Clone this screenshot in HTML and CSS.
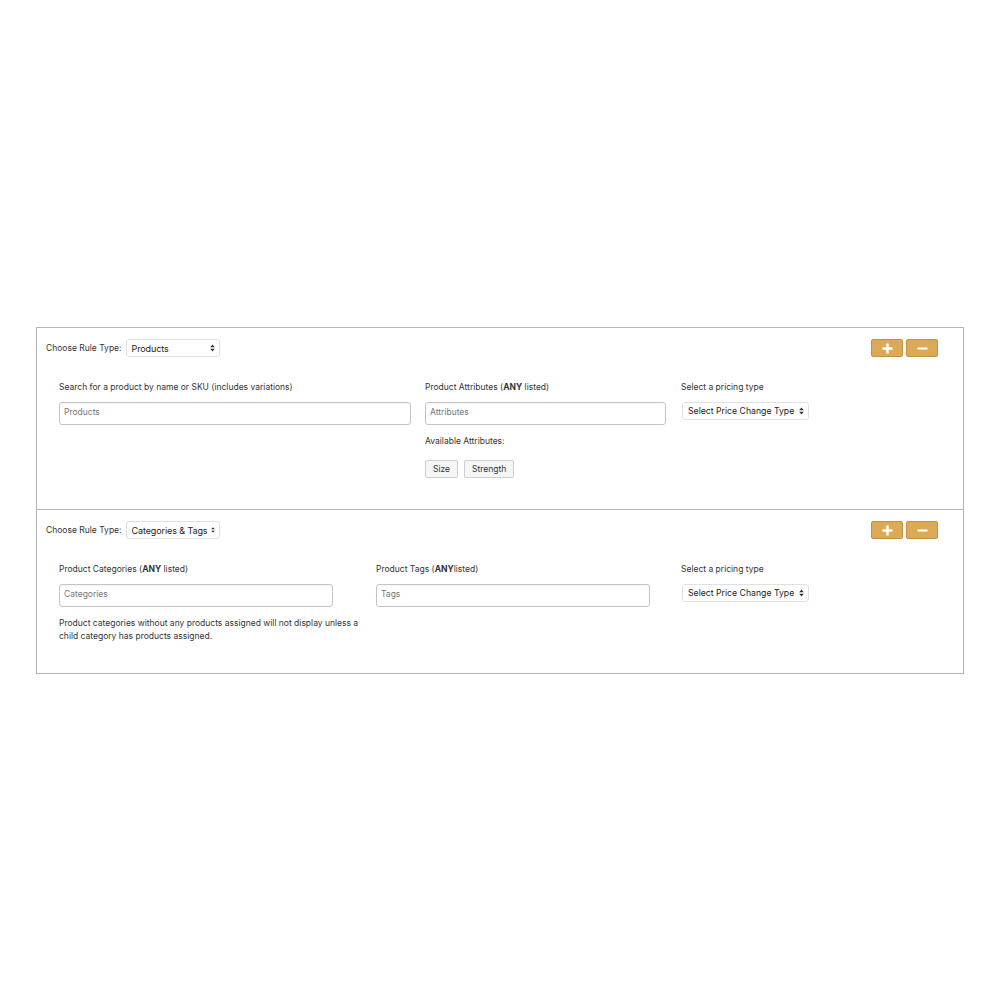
FILE: index.html
```html
<!DOCTYPE html>
<html lang="en">
<head>
  <meta charset="utf-8">
  <title>Pricing Rules</title>
  <link rel="stylesheet" href="styles.css">
</head>
<body>
  <div class="rules">

    <!-- rule 1: products -->
    <div class="rule">
      <div class="rule-head">
        <div class="rule-type">
          <span>Choose Rule Type:</span>
          <div class="select select-type">
            <span>Products</span>
            <svg class="arrows" width="5" height="8" viewBox="0 0 5 8"><path d="M2.5 0.5L4.8 3.2H0.2Z M2.5 7.5L4.8 4.8H0.2Z" fill="#333"/></svg>
          </div>
        </div>
        <div class="rule-actions">
          <button class="btn-gold" type="button"><svg width="11" height="11" viewBox="0 0 11 11"><path d="M5.5 0.5V10.5M0.5 5.5H10.5" stroke="#fff" stroke-width="2.4"/></svg></button>
          <button class="btn-gold" type="button"><svg width="11" height="11" viewBox="0 0 11 11"><path d="M0.5 5.5H10.5" stroke="#fff" stroke-width="2"/></svg></button>
        </div>
      </div>

      <div class="rule-body products-grid">
        <div class="field">
          <label>Search for a product by name or SKU (includes variations)</label>
          <input type="text" class="input input-wide" placeholder="Products">
        </div>
        <div class="field">
          <label>Product Attributes (<b>ANY</b> listed)</label>
          <input type="text" class="input input-mid" placeholder="Attributes">
          <p class="sub-label">Available Attributes:</p>
          <div class="chips">
            <span class="chip">Size</span>
            <span class="chip">Strength</span>
          </div>
        </div>
        <div class="field">
          <label>Select a pricing type</label>
          <div class="select select-price">
            <span>Select Price Change Type</span>
            <svg class="arrows" width="5" height="8" viewBox="0 0 5 8"><path d="M2.5 0.5L4.8 3.2H0.2Z M2.5 7.5L4.8 4.8H0.2Z" fill="#333"/></svg>
          </div>
        </div>
      </div>
    </div>

    <!-- rule 2: categories & tags -->
    <div class="rule rule-terms">
      <div class="rule-head">
        <div class="rule-type">
          <span>Choose Rule Type:</span>
          <div class="select select-type">
            <span>Categories &amp; Tags</span>
            <svg class="arrows" width="5" height="8" viewBox="0 0 5 8"><path d="M2.5 0.5L4.8 3.2H0.2Z M2.5 7.5L4.8 4.8H0.2Z" fill="#333"/></svg>
          </div>
        </div>
        <div class="rule-actions">
          <button class="btn-gold" type="button"><svg width="11" height="11" viewBox="0 0 11 11"><path d="M5.5 0.5V10.5M0.5 5.5H10.5" stroke="#fff" stroke-width="2.4"/></svg></button>
          <button class="btn-gold" type="button"><svg width="11" height="11" viewBox="0 0 11 11"><path d="M0.5 5.5H10.5" stroke="#fff" stroke-width="2"/></svg></button>
        </div>
      </div>

      <div class="rule-body terms-grid">
        <div class="field">
          <label>Product Categories (<b>ANY</b> listed)</label>
          <input type="text" class="input input-term" placeholder="Categories">
          <p class="help">Product categories without any products assigned will not display unless a child category has products assigned.</p>
        </div>
        <div class="field">
          <label>Product Tags (<b>ANY</b>listed)</label>
          <input type="text" class="input input-term" placeholder="Tags">
        </div>
        <div class="field">
          <label>Select a pricing type</label>
          <div class="select select-price">
            <span>Select Price Change Type</span>
            <svg class="arrows" width="5" height="8" viewBox="0 0 5 8"><path d="M2.5 0.5L4.8 3.2H0.2Z M2.5 7.5L4.8 4.8H0.2Z" fill="#333"/></svg>
          </div>
        </div>
      </div>
    </div>

  </div>
</body>
</html>
```

FILE: styles.css
```css
body {
  margin: 0;
  background: #fff;
  font-family: Inter, "Liberation Sans", sans-serif;
  font-size: 8.5px;
  color: #333;
}

.rules {
  width: 926px;
  margin: 327px 0 0 36px;
  border: 1px solid #b5b5b5;
  border-bottom: none;
}

.rule {
  border-bottom: 1px solid #b5b5b5;
  padding: 11px 25px 31px 9px;
}

.rule-terms {
  padding-bottom: 30px;
}

.rule-head {
  display: flex;
  justify-content: space-between;
  align-items: center;
  height: 18px;
}

.rule-type {
  display: flex;
  align-items: center;
  gap: 4px;
}

.rule-actions {
  display: flex;
  gap: 3px;
}

.btn-gold {
  width: 32px;
  height: 18px;
  padding: 0;
  display: flex;
  align-items: center;
  justify-content: center;
  background: #dcaa56;
  border: 1px solid #c49143;
  border-radius: 2px;
}

.select {
  display: flex;
  align-items: center;
  justify-content: space-between;
  gap: 3px;
  height: 18px;
  box-sizing: border-box;
  padding: 0 4px 0 5px;
  background: #fff;
  border: 1px solid #e0e0e0;
  border-radius: 3px;
  font-size: 9px;
  color: #222;
  white-space: nowrap;
}

.select-type {
  width: 94px;
  letter-spacing: -0.1px;
}

.select-price {
  width: 127px;
  margin: 1px 0 0 1px;
  font-size: 8.7px;
}

.rule-body {
  display: grid;
  margin: 24px 0 0 13px;
}

.products-grid {
  grid-template-columns: 366px 256px 1fr;
}

.terms-grid {
  grid-template-columns: 317px 305px 1fr;
}

label {
  display: block;
  line-height: 12px;
  margin-bottom: 9px;
}

label b {
  font-weight: 700;
}

.input {
  display: block;
  box-sizing: border-box;
  height: 23px;
  padding: 0 4px 3px;
  border: 1px solid #c4c4c4;
  border-radius: 3px;
  font-family: inherit;
  font-size: 8.5px;
  box-shadow: inset 0 1px 1px rgba(0, 0, 0, 0.04);
}

.input::placeholder {
  color: #777;
}

.input-wide { width: 352px; }
.input-mid { width: 241px; }
.input-term { width: 274px; }

.sub-label {
  margin: 10px 0 13px;
  line-height: 12px;
}

.chips {
  display: flex;
  gap: 6px;
}

.chip {
  height: 18px;
  box-sizing: border-box;
  padding: 0 7px;
  display: flex;
  align-items: center;
  background: #f6f6f6;
  border: 1px solid #cfcfcf;
  border-radius: 2px;
}

.help {
  margin: 10px 0 0;
  line-height: 13px;
  width: 302px;
}
```
